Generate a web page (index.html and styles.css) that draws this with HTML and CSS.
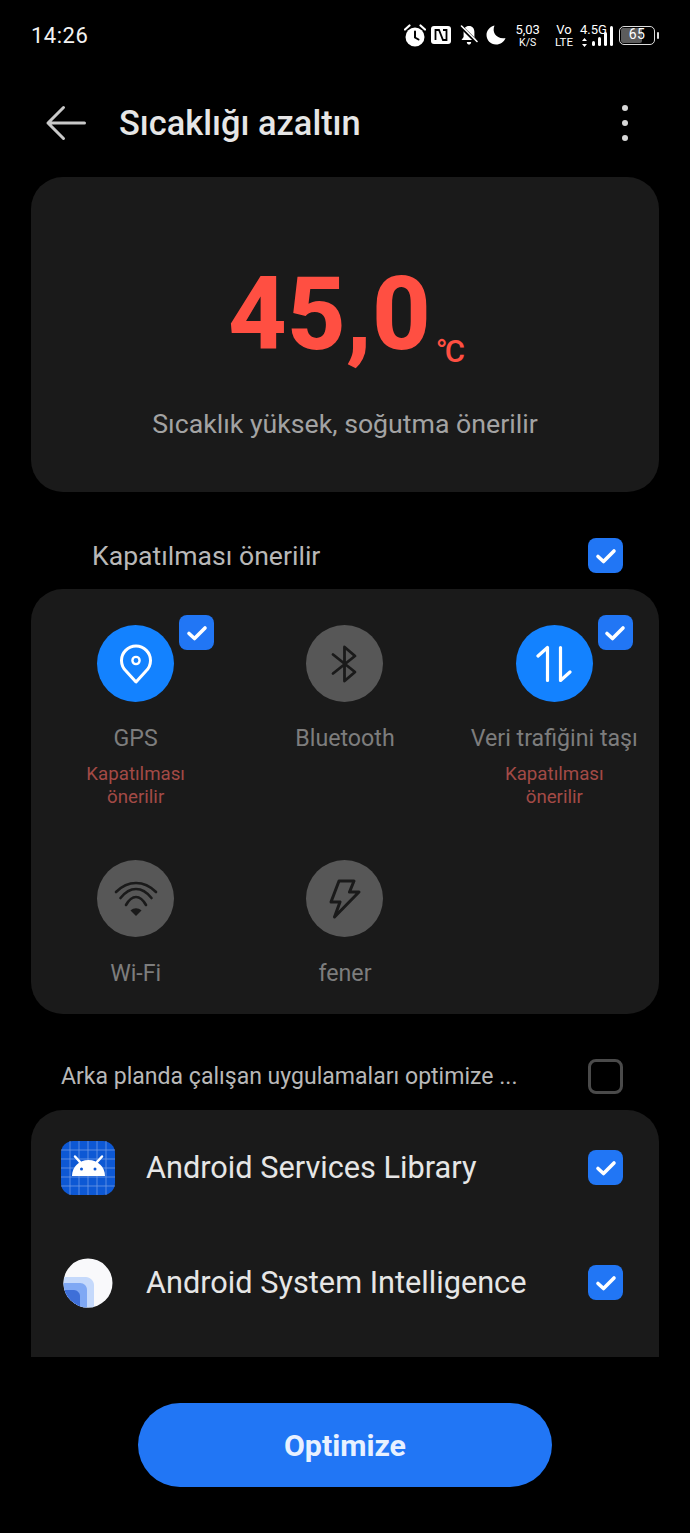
FILE: index.html
```html
<!DOCTYPE html>
<html lang="en">
<head>
    <meta charset="UTF-8">
    <meta name="viewport" content="width=device-width, initial-scale=1.0">
    <title>Sıcaklığı azaltın</title>
    <link rel="stylesheet" href="styles.css">
</head>
<body>
    <div class="page">
        <div class="status-bar">
            <div class="time">14:26</div>
            <div class="status-icons">
                <svg class="st-alarm" width="22" height="23" viewBox="0 0 22 23">
                    <circle cx="11" cy="13" r="9.5" fill="#fff"/>
                    <path d="M11 7.5V13.5L14.5 15.5" fill="none" stroke="#000" stroke-width="2" stroke-linecap="round"/>
                    <path d="M1 5.5L5.5 1.5M21 5.5L16.5 1.5" stroke="#fff" stroke-width="2.2" stroke-linecap="round"/>
                </svg>
                <svg class="st-nfc" width="20" height="18" viewBox="0 0 20 18">
                    <rect width="20" height="18" rx="3" fill="#fff"/>
                    <path d="M4.5 14V4H8L12 14H15.5V4H12" fill="none" stroke="#000" stroke-width="1.8"/>
                </svg>
                <svg class="st-bell" width="18" height="20" viewBox="0 0 18 20">
                    <path d="M9 1C5.5 1 3.6 3.6 3.6 7V12L1.5 15H16.5L14.4 12V7C14.4 3.6 12.5 1 9 1Z" fill="#fff"/>
                    <path d="M6.8 17H11.2C11 18.8 10 19.6 9 19.6S7 18.8 6.8 17Z" fill="#fff"/>
                    <path d="M1 1.5L17 17.5" stroke="#000" stroke-width="3.4"/>
                    <path d="M1.5 1L17 16.5" stroke="#fff" stroke-width="1.6" stroke-linecap="round"/>
                </svg>
                <svg class="st-moon" width="20" height="20" viewBox="0 0 20 20">
                    <path d="M8.5 0.5C5.5 7.5 10.5 14.5 19.5 13C18 17 14.500 19.500 10 19.500C4.500 19.500 0.500 15 0.500 10C0.500 5.500 4 1.500 8.500 0.500Z" fill="#fff"/>
                </svg>
                <div class="st-speed">
                    <span class="st-big">5,03</span>
                    <span class="st-small">K/S</span>
                </div>
                <div class="st-volte">
                    <span class="st-big">Vo</span>
                    <span class="st-small st-lte">LTE</span>
                </div>
                <div class="st-signal">
                    <span class="st-big st-net">4.5G</span>
                    <svg class="st-arrows" width="5" height="9" viewBox="0 0 5 9">
                        <path d="M2.500 0L5 3H0ZM2.500 9L0 6H5Z" fill="#fff"/>
                    </svg>
                    <svg class="st-bars" width="21" height="20" viewBox="0 0 21 20">
                        <rect x="0" y="15" width="3" height="5" rx="1.500" fill="#fff"/>
                        <rect x="6" y="11" width="3" height="9" rx="1.500" fill="#fff"/>
                        <rect x="12" y="6" width="3" height="14" rx="1.500" fill="#fff"/>
                        <rect x="18" y="0" width="3" height="20" rx="1.500" fill="#fff"/>
                    </svg>
                </div>
                <div class="battery">
                    <div class="battery-body"><span class="battery-level" style="width: 65%"></span><span class="battery-text">65</span></div>
                    <div class="battery-tip"></div>
                </div>
            </div>
        </div>

        <div class="header">
            <svg class="back" width="42" height="36" viewBox="0 0 42 36">
                <path d="M39.500 18H3M18.500 2.500L3 18L18.500 33.500" fill="none" stroke="#c9c9c9" stroke-width="3" stroke-linecap="round" stroke-linejoin="round"/>
            </svg>
            <div class="title">Sıcaklığı azaltın</div>
            <div class="more"><span></span><span></span><span></span></div>
        </div>

        <div class="card temp-card">
            <div class="temp"><span class="temp-value">45,0</span><span class="temp-unit">°C</span></div>
            <div class="temp-note">Sıcaklık yüksek, soğutma önerilir</div>
        </div>

        <div class="section-row section-first">
            <div class="section-label">Kapatılması önerilir</div>
            <div class="check on"><svg width="22" height="18" viewBox="0 0 22 18"><path d="M3 9.500L8.500 14.500L19 4" fill="none" stroke="#fff" stroke-width="3.600" stroke-linecap="round" stroke-linejoin="round"/></svg></div>
        </div>

        <div class="card toggles">
            <div class="toggle">
                <div class="toggle-circle active">
                    <svg width="34" height="40" viewBox="0 0 34 40">
                        <path d="M17 38L7 27A14.500 14.500 0 1 1 27 27Z" fill="none" stroke="#fff" stroke-width="3" stroke-linejoin="round"/>
                        <circle cx="17" cy="16.500" r="3.600" fill="none" stroke="#fff" stroke-width="2.400"/>
                    </svg>
                </div>
                <div class="check on badge"><svg width="22" height="18" viewBox="0 0 22 18"><path d="M3 9.500L8.500 14.500L19 4" fill="none" stroke="#fff" stroke-width="3.600" stroke-linecap="round" stroke-linejoin="round"/></svg></div>
                <div class="toggle-label">GPS</div>
                <div class="toggle-hint">Kapatılması<br>önerilir</div>
            </div>
            <div class="toggle">
                <div class="toggle-circle">
                    <svg width="30" height="40" viewBox="0 0 30 40">
                        <path d="M3 10.500L25 28L14.500 37V3L25 12L3 29.500" fill="none" stroke="#1a1a1a" stroke-width="2.800" stroke-linecap="round" stroke-linejoin="round"/>
                    </svg>
                </div>
                <div class="toggle-label">Bluetooth</div>
            </div>
            <div class="toggle">
                <div class="toggle-circle active">
                    <svg width="36" height="38" viewBox="0 0 36 38">
                        <path d="M2 11L11.500 2.500V35.500M24.500 2.500V35.500L34 27" fill="none" stroke="#fff" stroke-width="3.200" stroke-linecap="round" stroke-linejoin="round"/>
                    </svg>
                </div>
                <div class="check on badge"><svg width="22" height="18" viewBox="0 0 22 18"><path d="M3 9.500L8.500 14.500L19 4" fill="none" stroke="#fff" stroke-width="3.600" stroke-linecap="round" stroke-linejoin="round"/></svg></div>
                <div class="toggle-label">Veri trafiğini taşı</div>
                <div class="toggle-hint">Kapatılması<br>önerilir</div>
            </div>
            <div class="toggle">
                <div class="toggle-circle">
                    <svg width="44" height="36" viewBox="0 0 44 36">
                        <path d="M2 11C14 -1 30 -1 42 11M6.500 17C16 5 28 5 37.500 17M12 24C18 13.300 26 13.300 32 24" fill="none" stroke="#1a1a1a" stroke-width="2.600" stroke-linecap="round"/>
                        <path d="M16.500 29.500C20 26.500 24 26.500 27.500 29.500L22 35Z" fill="#1a1a1a"/>
                    </svg>
                </div>
                <div class="toggle-label">Wi-Fi</div>
            </div>
            <div class="toggle">
                <div class="toggle-circle">
                    <svg width="32" height="40" viewBox="0 0 32 40">
                        <path d="M10 2H25L20.500 13H30L5.500 38L11 23H2Z" fill="none" stroke="#1a1a1a" stroke-width="3" stroke-linecap="round" stroke-linejoin="round"/>
                    </svg>
                </div>
                <div class="toggle-label">fener</div>
            </div>
        </div>

        <div class="section-row section-second">
            <div class="section-label small">Arka planda çalışan uygulamaları optimize ...</div>
            <div class="check"></div>
        </div>

        <div class="card apps">
            <div class="app-row">
                <svg class="app-icon" width="54" height="54" viewBox="0 0 54 54">
                    <rect width="54" height="54" rx="12" fill="#0d58d4"/>
                    <path d="M9 0V54M18 0V54M27 0V54M36 0V54M45 0V54M0 9H54M0 18H54M0 27H54M0 36H54M0 45H54" stroke="#6f9be6" stroke-width="0.800"/>
                    <path d="M11 35C11 26 18 19 27.500 19S44 26 44 35Z" fill="#fff"/>
                    <path d="M19 21L14 15.500M36 21L41 15.500" stroke="#fff" stroke-width="2.500" stroke-linecap="round"/>
                    <circle cx="20.500" cy="28" r="1.500" fill="#0d58d4"/>
                    <circle cx="34" cy="28" r="1.500" fill="#0d58d4"/>
                </svg>
                <div class="app-name">Android Services Library</div>
                <div class="check on"><svg width="22" height="18" viewBox="0 0 22 18"><path d="M3 9.500L8.500 14.500L19 4" fill="none" stroke="#fff" stroke-width="3.600" stroke-linecap="round" stroke-linejoin="round"/></svg></div>
            </div>
            <div class="app-row">
                <svg class="app-icon" width="54" height="54" viewBox="0 0 54 54">
                    <defs><clipPath id="appClip"><circle cx="27" cy="27" r="24.500"/></clipPath></defs>
                    <circle cx="27" cy="27" r="24.500" fill="#f9f9fb"/>
                    <g clip-path="url(#appClip)">
                        <path d="M0 21H25C29 21 33 25 33 29V54H0Z" fill="#c5d9fb"/>
                        <path d="M0 27H19C23 27 26 30 26 34V54H0Z" fill="#7fa8f4"/>
                        <path d="M0 34H13C16 34 19 37 19 40V54H0Z" fill="#3e6fd8"/>
                    </g>
                </svg>
                <div class="app-name">Android System Intelligence</div>
                <div class="check on"><svg width="22" height="18" viewBox="0 0 22 18"><path d="M3 9.500L8.500 14.500L19 4" fill="none" stroke="#fff" stroke-width="3.600" stroke-linecap="round" stroke-linejoin="round"/></svg></div>
            </div>
        </div>

        <div class="footer">
            <button class="optimize">Optimize</button>
        </div>
    </div>
</body>
</html>
```

FILE: styles.css
```css
body {
    margin: 0;
    background-color: #000;
    font-family: Roboto, Arial, sans-serif;
    color: #fff;
}

.page {
    width: 690px;
    height: 1533px;
    display: flex;
    flex-direction: column;
    overflow: hidden;
}

/* Status bar */
.status-bar {
    height: 70px;
    display: flex;
    justify-content: space-between;
    align-items: center;
    padding: 0 31px;
    flex-shrink: 0;
}

.time {
    font-size: 22px;
    letter-spacing: 0.5px;
    color: #f2f2f2;
}

.status-icons {
    display: flex;
    align-items: center;
}

.status-icons svg {
    display: block;
}

.st-alarm {
    margin-right: 5px;
}

.st-nfc {
    margin-right: 9px;
}

.st-bell {
    margin-right: 8px;
}

.st-moon {
    margin-right: 9px;
}

.st-speed,
.st-volte {
    display: flex;
    flex-direction: column;
    align-items: center;
    line-height: 1;
}

.st-speed {
    margin-right: 15px;
}

.st-volte {
    margin-right: 7px;
}

.st-big {
    font-size: 13px;
    line-height: 13px;
}

.st-small {
    font-size: 10.500px;
    line-height: 11px;
    margin-top: 1px;
}

.st-lte {
    font-size: 11.500px;
}

.st-signal {
    position: relative;
    width: 33px;
    height: 21px;
    margin-right: 6px;
}

.st-net {
    position: absolute;
    left: 0;
    top: -2px;
}

.st-arrows {
    position: absolute;
    left: 2px;
    top: 13px;
}

.st-bars {
    position: absolute;
    right: 0;
    top: 1px;
}

.battery {
    display: flex;
    align-items: center;
    gap: 2px;
}

.battery-body {
    position: relative;
    width: 32px;
    height: 15px;
    border: 1.500px solid #ddd;
    border-radius: 5px;
    padding: 1px;
    overflow: hidden;
}

.battery-level {
    display: block;
    height: 100%;
    background-color: #5c5c5c;
    border-radius: 2px;
}

.battery-text {
    position: absolute;
    top: 0;
    left: 0;
    right: 0;
    text-align: center;
    font-size: 14px;
    line-height: 15px;
    letter-spacing: 0.5px;
}

.battery-tip {
    width: 2px;
    height: 7px;
    background-color: #ddd;
    border-radius: 1px;
}

/* Header */
.header {
    height: 105px;
    padding: 0 31px 2px 45px;
    display: flex;
    align-items: center;
    flex-shrink: 0;
}

.back {
    margin-right: 32px;
}

.title {
    flex: 1;
    font-size: 34.400px;
    font-weight: 500;
    color: #e6e6e6;
}

.more {
    display: flex;
    flex-direction: column;
    gap: 9px;
    margin-right: 31px;
}

.more span {
    width: 6px;
    height: 6px;
    border-radius: 50%;
    background-color: #d8d8d8;
}

/* Cards */
.card {
    margin: 0 31px;
    background-color: #1a1a1a;
    border-radius: 32px;
    flex-shrink: 0;
}

.temp-card {
    height: 315px;
    box-sizing: border-box;
    padding-top: 76px;
    text-align: center;
}

.temp {
    display: flex;
    justify-content: center;
    align-items: baseline;
    height: 122px;
    color: #ff4f42;
}

.temp-value {
    font-size: 102px;
    font-weight: 800;
    line-height: 122px;
}

.temp-unit {
    align-self: flex-end;
    margin: 0 0 8px 5px;
    font-size: 31px;
    font-weight: 500;
    line-height: 30px;
    letter-spacing: -3px;
}

.temp-note {
    margin-top: 33px;
    font-size: 26.700px;
    color: #a3a3a3;
}

/* Section rows */
.section-row {
    display: flex;
    justify-content: space-between;
    align-items: center;
    padding-right: 67px;
    flex-shrink: 0;
    box-sizing: border-box;
}

.section-first {
    height: 97px;
    padding-left: 92px;
    padding-top: 30px;
}

.section-second {
    height: 96px;
    padding-left: 61px;
    padding-top: 29px;
}

.section-label {
    font-size: 26.600px;
    color: #b8b8b8;
}

.section-label.small {
    font-size: 23.050px;
}

.check {
    width: 35px;
    height: 35px;
    box-sizing: border-box;
    border: 3px solid #4a4a4a;
    border-radius: 8px;
    display: flex;
    align-items: center;
    justify-content: center;
}

.check.on {
    background-color: #2176f5;
    border: none;
}

/* Toggle grid */
.toggles {
    height: 425px;
    display: grid;
    grid-template-columns: repeat(3, 1fr);
    grid-template-rows: 235px 190px;
}

.toggle {
    position: relative;
    display: flex;
    flex-direction: column;
    align-items: center;
    padding-top: 36px;
}

.toggle-circle {
    width: 77px;
    height: 77px;
    border-radius: 50%;
    background-color: #575757;
    display: flex;
    align-items: center;
    justify-content: center;
}

.toggle-circle.active {
    background-color: #1382ff;
}

.badge {
    position: absolute;
    top: 26px;
    left: 148px;
}

.toggle-label {
    margin-top: 22px;
    font-size: 23.200px;
    line-height: 28px;
    color: #7d7d7d;
    white-space: nowrap;
}

.toggle-hint {
    margin-top: 11px;
    font-size: 18.700px;
    line-height: 23px;
    text-align: center;
    color: #a34a46;
}

/* App list, cut off by the footer */
.apps {
    height: 247px;
    border-radius: 32px 32px 0 0;
    padding: 0 36px 0 30px;
    overflow: hidden;
}

.app-row {
    height: 115px;
    display: flex;
    align-items: center;
}

.app-icon {
    margin-right: 31px;
    flex-shrink: 0;
}

.app-name {
    flex: 1;
    font-size: 30.700px;
    color: #e6e6e6;
}

/* Footer */
.footer {
    flex: 1;
    display: flex;
    justify-content: center;
    padding-top: 46px;
}

.optimize {
    width: 414px;
    height: 84px;
    border: none;
    border-radius: 42px;
    background-color: #2176f5;
    color: #e8f1ff;
    font-family: Roboto, Arial, sans-serif;
    font-size: 30.300px;
    font-weight: 700;
}
```
